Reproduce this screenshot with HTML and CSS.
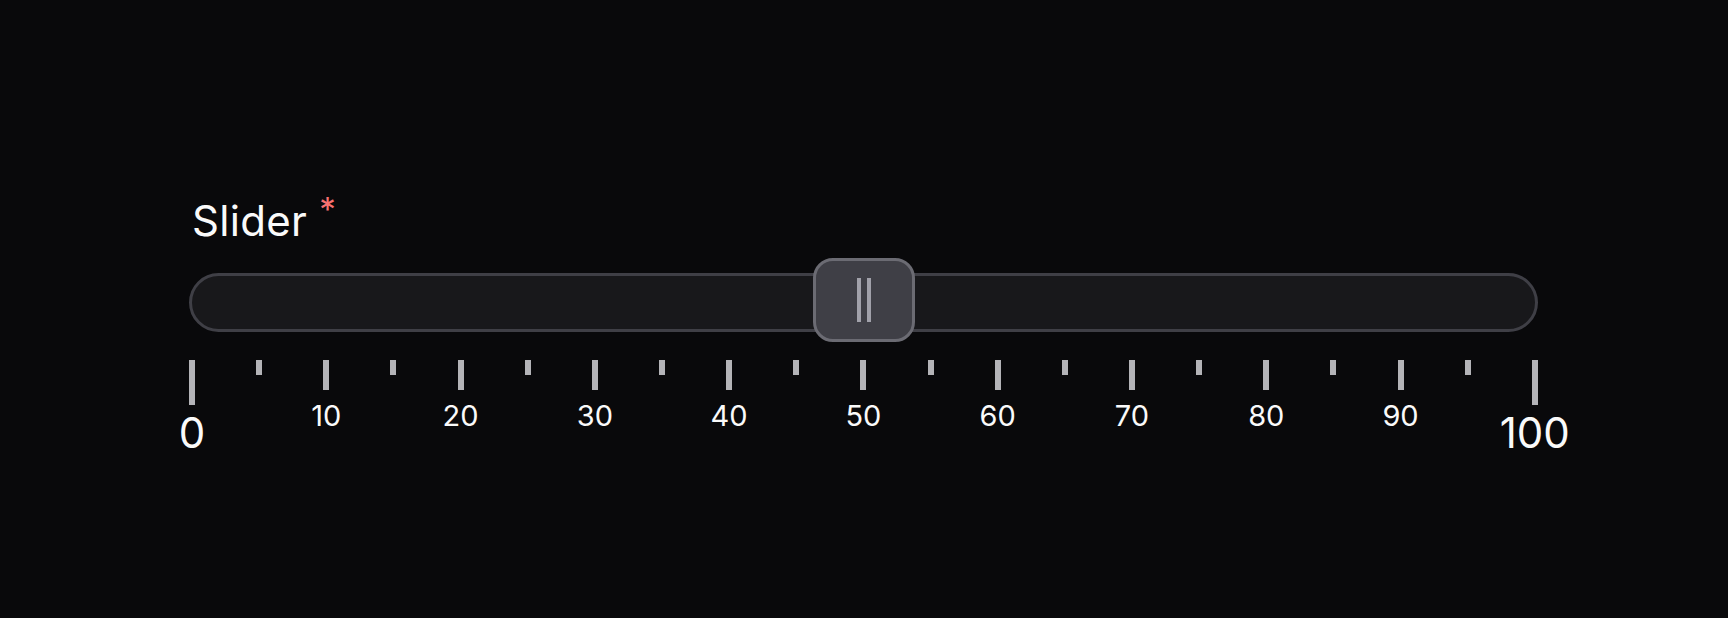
FILE: index.html
```html
<!DOCTYPE html>
<html lang="en">
<head>
<meta charset="utf-8">
<title>Slider</title>
<link rel="stylesheet" href="styles.css">
</head>
<body>
<div class="field">
  <label class="label">Slider <span class="req">*</span></label>
  <div class="slider">
    <div class="track">
      <div class="thumb" role="slider" aria-valuenow="50" aria-valuemin="0" aria-valuemax="100">
        <span class="grip"></span><span class="grip"></span>
      </div>
    </div>
  </div>
  <div class="scale">
    <div class="tick end"><span class="bar"></span><span class="num">0</span></div>
    <div class="tick minor"><span class="bar"></span></div>
    <div class="tick major"><span class="bar"></span><span class="num">10</span></div>
    <div class="tick minor"><span class="bar"></span></div>
    <div class="tick major"><span class="bar"></span><span class="num">20</span></div>
    <div class="tick minor"><span class="bar"></span></div>
    <div class="tick major"><span class="bar"></span><span class="num">30</span></div>
    <div class="tick minor"><span class="bar"></span></div>
    <div class="tick major"><span class="bar"></span><span class="num">40</span></div>
    <div class="tick minor"><span class="bar"></span></div>
    <div class="tick major"><span class="bar"></span><span class="num">50</span></div>
    <div class="tick minor"><span class="bar"></span></div>
    <div class="tick major"><span class="bar"></span><span class="num">60</span></div>
    <div class="tick minor"><span class="bar"></span></div>
    <div class="tick major"><span class="bar"></span><span class="num">70</span></div>
    <div class="tick minor"><span class="bar"></span></div>
    <div class="tick major"><span class="bar"></span><span class="num">80</span></div>
    <div class="tick minor"><span class="bar"></span></div>
    <div class="tick major"><span class="bar"></span><span class="num">90</span></div>
    <div class="tick minor"><span class="bar"></span></div>
    <div class="tick end"><span class="bar"></span><span class="num">100</span></div>
  </div>
</div>
</body>
</html>
```

FILE: styles.css
```css
html, body {
  margin: 0;
  padding: 0;
  background: #09090b;
  height: 100%;
}

body {
  font-family: Inter, "Noto Sans", "Liberation Sans", sans-serif;
  color: #fafafa;
}

.field {
  width: 1349px;
  padding: 200px 0 0 189px;
  display: flex;
  flex-direction: column;
}

.label {
  font-size: 42px;
  line-height: 42px;
  padding-left: 3px;
  font-weight: 400;
  letter-spacing: 0.3px;
}

.req {
  color: #f87171;
  font-size: 33px;
  line-height: 0;
  margin-left: 0;
  vertical-align: 15px;
}

.slider {
  margin-top: 16px;
  height: 84px;
}

.track {
  position: relative;
  margin-top: 15px;
  height: 59px;
  box-sizing: border-box;
  border: 3px solid #3f3f46;
  border-radius: 30px;
  background: #18181b;
}

.thumb {
  position: absolute;
  left: 50%;
  top: -18px;
  transform: translateX(-50%);
  width: 102px;
  height: 84px;
  box-sizing: border-box;
  border: 3px solid #6b6b73;
  border-radius: 20px;
  background: #3f3f46;
  display: flex;
  justify-content: center;
  align-items: center;
  gap: 6px;
}

.grip {
  width: 4px;
  height: 44px;
  background: #a1a1aa;
}

.scale {
  margin-top: 18px;
  display: flex;
  justify-content: space-between;
}

.tick {
  width: 6px;
  display: flex;
  flex-direction: column;
  align-items: center;
}

.bar {
  display: block;
  width: 6px;
  background: #b4b4b8;
}

.minor .bar { height: 15px; }
.major .bar { height: 30px; }
.end .bar { height: 45px; }

.num {
  white-space: nowrap;
  color: #fafafa;
}

.major .num {
  margin-top: 11px;
  font-size: 29px;
  line-height: 29px;
}

.end .num {
  margin-top: 7px;
  font-size: 42px;
  line-height: 42px;
}
```
